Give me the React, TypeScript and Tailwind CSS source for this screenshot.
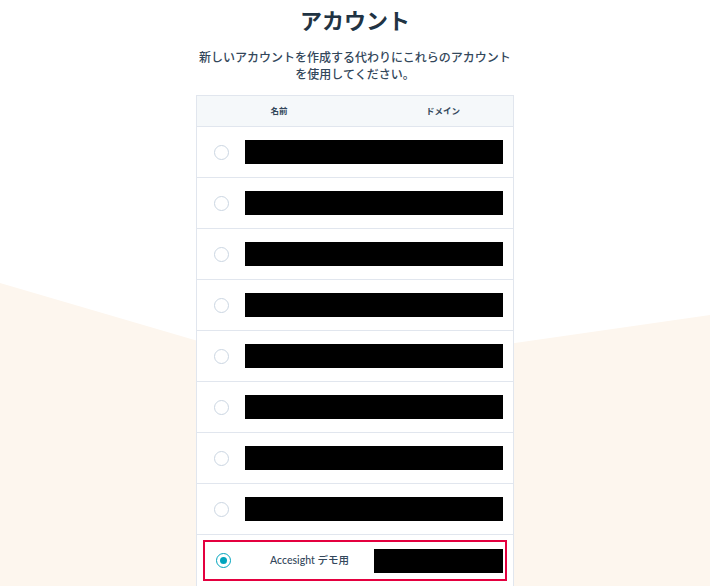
import React from 'react';

const font = "font-['Lato','Noto_Sans_CJK_JP',sans-serif]";

const Radio = ({ checked }: { checked?: boolean }) =>
  checked ? (
    <span className="flex h-[15px] w-[15px] items-center justify-center rounded-full border-[1.5px] border-[#00a4bd]">
      <span className="h-[7px] w-[7px] rounded-full bg-[#00a4bd]" />
    </span>
  ) : (
    <span className="block h-[15px] w-[15px] rounded-full border-[1.5px] border-[#cbd6e2] bg-white" />
  );

const App = () => {
  const rows = Array.from({ length: 8 });

  return (
    <div className={`relative h-[586px] w-full overflow-hidden bg-white ${font}`}>
      {/* background wave */}
      <svg className="absolute left-0 top-0 h-[586px] w-[710px]" viewBox="0 0 710 586">
        <polygon points="0,283 307,373 710,315 710,586 0,586" fill="#fdf6ee" />
      </svg>

      <div className="relative flex flex-col items-center">
        <h1 className="mt-[7px] text-[22px] font-bold leading-[28px] text-[#213343]">アカウント</h1>
        <p className="mt-[14px] w-[330px] whitespace-nowrap text-center text-[12px] font-medium leading-[17px] text-[#33475b]">
          新しいアカウントを作成する代わりにこれらのアカウント
          <br />
          を使用してください。
        </p>

        <div className="mt-[12px] w-[318px] border border-b-0 border-[#e1e6ee] bg-white">
          <div className="flex h-[31px] items-center border-b border-[#e1e6ee] bg-[#f5f8fa] text-[8.5px] font-bold text-[#33475b]">
            <span className="w-[164px] text-center">名前</span>
            <span className="flex-1 pl-[12px] text-center">ドメイン</span>
          </div>

          {rows.map((_, i) => (
            <div key={i} className="flex h-[51px] items-center border-b border-[#e1e6ee]">
              <div className="flex w-[48px] justify-center pl-[1px]">
                <Radio />
              </div>
              <div className="h-[24px] w-[258px] bg-black" />
            </div>
          ))}

          <div className="px-[6px] pt-[5px] pb-[6px]">
            <div className="flex h-[41px] items-center border-2 border-[#e4003f]">
              <div className="flex w-[34px] justify-center pl-[2px]">
                <Radio checked />
              </div>
              <span className="w-[135px] pl-[6px] text-center text-[10.5px] font-medium text-[#33475b]">Accesight デモ用</span>
              <div className="h-[24px] w-[129px] bg-black" />
            </div>
          </div>
        </div>
      </div>
    </div>
  );
};

export default App;
